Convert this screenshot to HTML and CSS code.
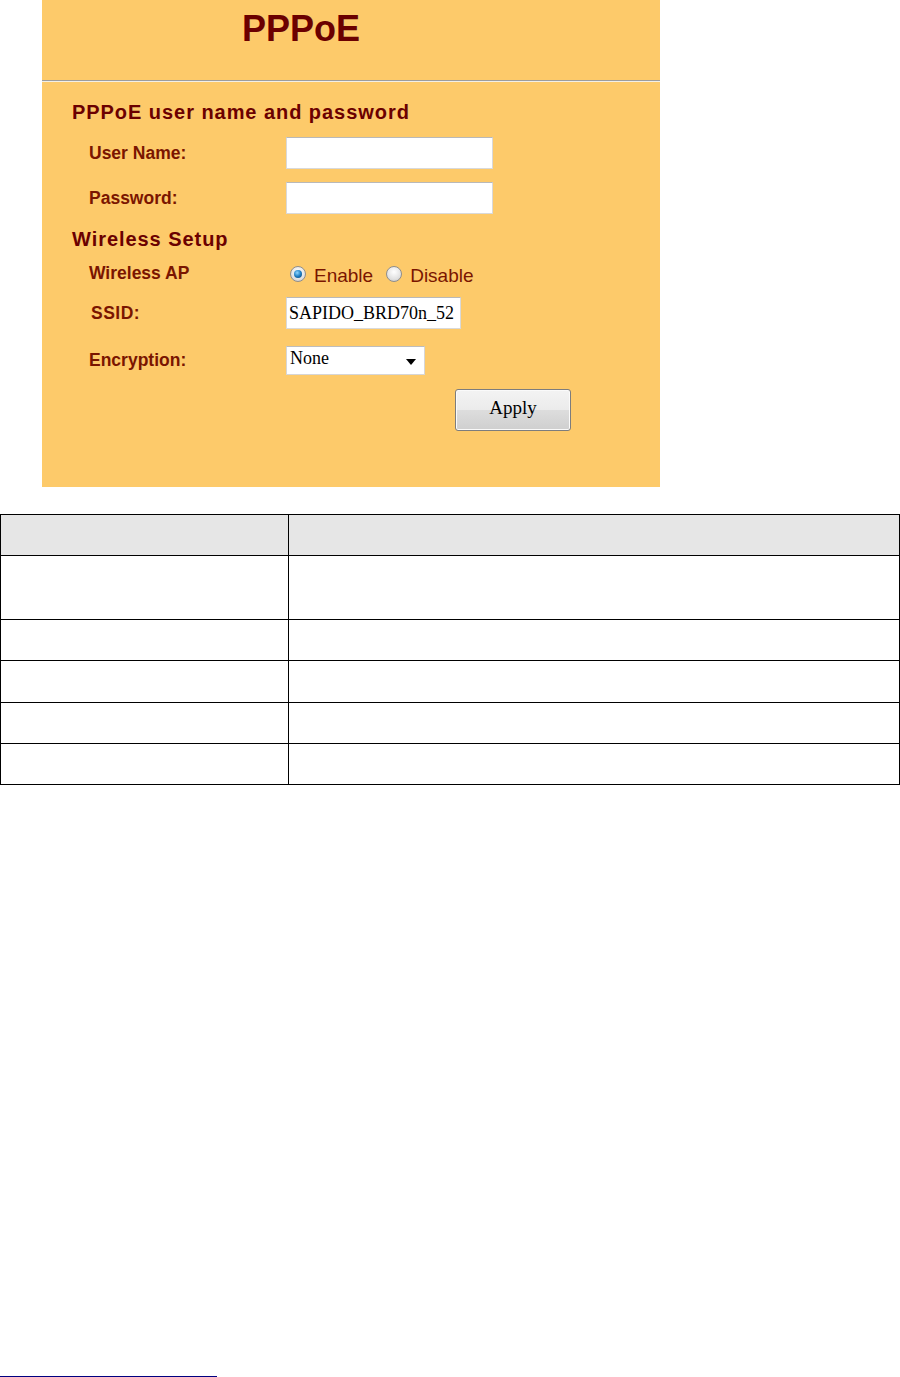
FILE: index.html
```html
<!DOCTYPE html>
<html>
<head>
<meta charset="utf-8">
<link rel="stylesheet" href="styles.css">
</head>
<body>
<div class="panel">
  <div class="panel-head"><h1 class="title">PPPoE</h1></div>
  <div class="form">
    <h2 class="section">PPPoE user name and password</h2>
    <div class="row row-input">
      <span class="label">User Name:</span>
      <input class="text" type="text">
    </div>
    <div class="row row-input row-gap">
      <span class="label">Password:</span>
      <input class="text" type="password">
    </div>
    <h2 class="section section-2">Wireless Setup</h2>
    <div class="row row-radio">
      <span class="label">Wireless AP</span>
      <label class="opt"><span class="radio on"></span>Enable</label>
      <label class="opt"><span class="radio"></span>Disable</label>
    </div>
    <div class="row row-ssid">
      <span class="label label-ssid">SSID:</span>
      <input class="text ssid" type="text" value="SAPIDO_BRD70n_52">
    </div>
    <div class="row row-enc">
      <span class="label">Encryption:</span>
      <div class="select">
        <span class="select-val">None</span>
        <svg class="arrow" width="10" height="6" viewBox="0 0 10 6"><path d="M0 0H10L5 6Z" fill="#000"/></svg>
      </div>
    </div>
    <div class="actions">
      <button class="apply" type="button">Apply</button>
    </div>
  </div>
</div>
<table class="grid">
  <tr class="h"><th></th><th></th></tr>
  <tr class="r1"><td></td><td></td></tr>
  <tr class="r2"><td></td><td></td></tr>
  <tr class="r3"><td></td><td></td></tr>
  <tr class="r2"><td></td><td></td></tr>
  <tr class="r2"><td></td><td></td></tr>
</table>
<div class="footnote-rule"></div>
</body>
</html>
```
FILE: styles.css
```css
html, body { margin: 0; padding: 0; background: #fff; }
body { font-family: "Liberation Sans", Arial, sans-serif; width: 900px; height: 1377px; position: relative; }

.panel {
  margin-left: 42px;
  width: 618px;
  height: 487px;
  background: #fdca6a;
  color: #6e0a00;
}
.panel-head {
  height: 80px;
  border-bottom: 1px solid #9d9d9d;
  box-shadow: 0 1px 0 #f3efe6;
  box-sizing: content-box;
}
.title {
  margin: 0;
  padding: 8px 0 0 200px;
  font-size: 36px;
  line-height: 42px;
  font-weight: bold;
  color: #6b0000;
}
.form { padding: 19px 0 0 30px; }
.section {
  margin: 0;
  font-size: 20px;
  line-height: 24px;
  font-weight: bold;
  letter-spacing: 0.95px;
  color: #6b0000;
}
.section-2 { margin-top: 13px; }
.row { display: flex; align-items: center; padding-left: 17px; }
.label {
  width: 197px;
  flex: none;
  font-size: 17.5px;
  font-weight: bold;
  color: #7a1500;
}
.label-ssid { letter-spacing: 0.5px; padding-left: 2px; width: 195px; }
.row-input { margin-top: 13px; height: 32px; }
.row-gap { margin-top: 13px; }
.text {
  box-sizing: border-box;
  width: 207px;
  height: 32px;
  margin: 0;
  border: 1px solid #d9d9d9;
  border-top-color: #b9b9b9;
  background: #fff;
  padding: 0 2px;
  font-family: "Liberation Serif", "DejaVu Serif", serif;
  font-size: 18px;
  color: #000;
  outline: none;
}
.row-radio { margin-top: 11px; height: 24px; }
.row-radio .label { position: relative; top: -1px; }
.opt {
  display: flex;
  align-items: center;
  font-size: 19px;
  color: #7a1500;
  margin-right: 9px;
  position: relative;
  top: 2px;
}
.radio {
  width: 16px;
  height: 16px;
  border-radius: 50%;
  box-sizing: border-box;
  border: 1px solid #8e8e8e;
  background: radial-gradient(circle at 50% 35%, #ffffff 0%, #e2e2e2 60%, #c4c4c4 100%);
  margin: 0 8px 0 4px;
  position: relative;
  top: -2px;
}
.radio.on::after {
  content: "";
  position: absolute;
  left: 3px; top: 3px;
  width: 8px; height: 8px;
  border-radius: 50%;
  background: radial-gradient(circle at 40% 35%, #8fd6ff 0%, #1f7fc4 50%, #0a3d6b 100%);
}
.row-ssid { margin-top: 11px; height: 32px; }
.ssid { width: 175px; }
.row-enc { margin-top: 17px; height: 29px; }
.select {
  box-sizing: border-box;
  width: 139px;
  height: 29px;
  border: 1px solid #d6d6d6;
  border-top-color: #bdbdbd;
  background: #fff;
  display: flex;
  align-items: center;
  justify-content: space-between;
  padding: 0 8px 0 3px;
}
.select-val {
  font-family: "Liberation Serif", "DejaVu Serif", serif;
  font-size: 18px;
  color: #000;
  position: relative;
  top: -2px;
}
.arrow { position: relative; top: 1px; }
.actions { margin-top: 14px; padding-left: 383px; }
.apply {
  box-sizing: border-box;
  width: 116px;
  height: 42px;
  border: 1px solid #7d7d7d;
  border-radius: 3px;
  background: linear-gradient(#f3f3f3 0%, #ebebeb 50%, #dddddd 51%, #cfcfcf 100%);
  font-family: "Liberation Serif", "DejaVu Serif", serif;
  font-size: 19px;
  color: #000;
  padding: 0 0 4px 0;
  box-shadow: inset 0 0 0 1px #fafafa;
}

.grid {
  margin-top: 27px;
  width: 900px;
  border-collapse: collapse;
  table-layout: fixed;
}
.grid th, .grid td { border: 1px solid #000; padding: 0; }
.grid th:first-child, .grid td:first-child { width: 287px; }
.grid .h th { background: #e6e6e6; height: 40px; }
.grid .r1 td { height: 63px; }
.grid .r2 td { height: 40px; }
.grid .r3 td { height: 41px; }

.footnote-rule {
  position: absolute;
  left: 0;
  top: 1376px;
  width: 217px;
  border-top: 1px solid #000080;
}
```
